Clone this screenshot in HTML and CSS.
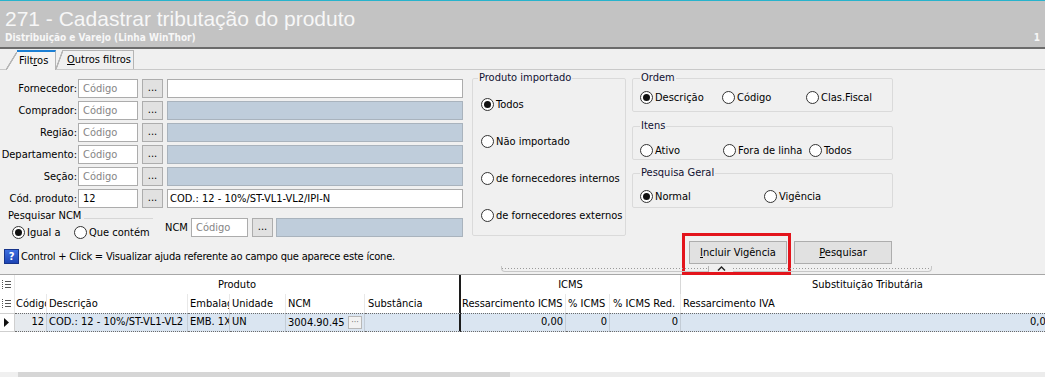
FILE: index.html
```html
<!DOCTYPE html>
<html lang="pt-BR">
<head>
<meta charset="utf-8">
<title>271 - Cadastrar tributação do produto</title>
<link rel="stylesheet" href="styles.css">
</head>
<body>
<header class="hdr">
  <div class="title">271 - Cadastrar tributação do produto</div>
  <div class="subrow"><span class="subtitle">Distribuição e Varejo (Linha WinThor)</span><span class="ver">1</span></div>
</header>
<nav class="tabs">
  <div class="tab tab-active">Filt<u>r</u>os</div>
  <div class="tab tab-2"><u>O</u>utros filtros</div>
</nav>
<main class="panel">
  <section class="left">
    <div class="frow"><span class="flabel">Fornecedor:</span><span class="code ph">Código</span><span class="dots">...</span><span class="desc desc-white"></span></div>
    <div class="frow"><span class="flabel">Comprador:</span><span class="code ph">Código</span><span class="dots">...</span><span class="desc desc-gray"></span></div>
    <div class="frow"><span class="flabel">Região:</span><span class="code ph">Código</span><span class="dots">...</span><span class="desc desc-gray"></span></div>
    <div class="frow"><span class="flabel">Departamento:</span><span class="code ph">Código</span><span class="dots">...</span><span class="desc desc-gray"></span></div>
    <div class="frow"><span class="flabel">Seção:</span><span class="code ph">Código</span><span class="dots">...</span><span class="desc desc-gray"></span></div>
    <div class="frow"><span class="flabel">Cód. produto:</span><span class="code">12</span><span class="dots">...</span><span class="desc desc-white">COD.: 12 - 10%/ST-VL1-VL2/IPI-N</span></div>
    <div class="ncm">
      <div class="ncm-search">
        <div class="ncm-legend"><span>Pesquisar NCM</span><span class="ncm-line"></span></div>
        <div class="ncm-opts">
          <span class="radio on w-igual"><i></i>Igual a</span>
          <span class="radio"><i></i>Que contém</span>
        </div>
      </div>
      <div class="ncm-field"><span class="ncm-label">NCM</span><span class="code code-ncm ph">Código</span><span class="dots">...</span><span class="desc desc-gray desc-ncm"></span></div>
    </div>
    <div class="help"><span class="help-icon">?</span>Control + Click = Visualizar ajuda referente ao campo que aparece este ícone.</div>
  </section>

  <fieldset class="grp grp-imp">
    <legend>Produto importado</legend>
    <div class="imp-opts">
      <span class="radio on"><i></i>Todos</span>
      <span class="radio"><i></i>Não importado</span>
      <span class="radio"><i></i>de fornecedores internos</span>
      <span class="radio"><i></i>de fornecedores externos</span>
    </div>
  </fieldset>

  <section class="right">
    <fieldset class="grp g-ordem">
      <legend>Ordem</legend>
      <div class="opts opts-ordem">
        <span class="radio on"><i></i>Descrição</span>
        <span class="radio"><i></i>Código</span>
        <span class="radio"><i></i>Clas.Fiscal</span>
      </div>
    </fieldset>
    <fieldset class="grp g-itens">
      <legend>Itens</legend>
      <div class="opts opts-itens">
        <span class="radio"><i></i>Ativo</span>
        <span class="radio"><i></i>Fora de linha</span>
        <span class="radio"><i></i>Todos</span>
      </div>
    </fieldset>
    <fieldset class="grp g-geral">
      <legend>Pesquisa Geral</legend>
      <div class="opts opts-geral">
        <span class="radio on"><i></i>Normal</span>
        <span class="radio"><i></i>Vigência</span>
      </div>
    </fieldset>
    <div class="btns">
      <div class="btn"><span><u>I</u>ncluir Vigência</span><span class="mark"></span></div>
      <div class="btn"><span><u>P</u>esquisar</span></div>
    </div>
  </section>
</main>

<div class="splitter">
  <div class="split-bar">
    <span class="knob"><svg width="9" height="5" viewBox="0 0 9 5"><path d="M1 4.5 L4.5 1 L8 4.5" fill="none" stroke="#222" stroke-width="1.4"/></svg></span>
  </div>
</div>

<section class="grid">
  <div class="gh gh1">
    <div class="hc ind"><svg class="colicon" width="9" height="9" viewBox="0 0 9 9"><g fill="#555"><rect x="0" y="0" width="1" height="1"/><rect x="0" y="2" width="1" height="1"/><rect x="0" y="4" width="1" height="1"/><rect x="0" y="6" width="1" height="1"/><rect x="0" y="8" width="1" height="1"/><rect x="3" y="1" width="6" height="1"/><rect x="3" y="4" width="6" height="1"/><rect x="3" y="7" width="6" height="1"/></g></svg></div>
    <div class="hc span-prod center thick">Produto</div>
    <div class="hc span-icms center">ICMS</div>
    <div class="hc center">Substituição Tributária</div>
  </div>
  <div class="gh gh2">
    <div class="hc ind"><svg class="colicon" width="9" height="9" viewBox="0 0 9 9"><g fill="#555"><rect x="0" y="0" width="1" height="1"/><rect x="0" y="2" width="1" height="1"/><rect x="0" y="4" width="1" height="1"/><rect x="0" y="6" width="1" height="1"/><rect x="0" y="8" width="1" height="1"/><rect x="3" y="1" width="6" height="1"/><rect x="3" y="4" width="6" height="1"/><rect x="3" y="7" width="6" height="1"/></g></svg></div>
    <div class="hc pad1">Código</div>
    <div class="hc">Descrição</div>
    <div class="hc">Embalagem</div>
    <div class="hc">Unidade</div>
    <div class="hc">NCM</div>
    <div class="hc thick pad3">Substância</div>
    <div class="hc pad1">Ressarcimento ICMS</div>
    <div class="hc">% ICMS</div>
    <div class="hc pad3">% ICMS Red.</div>
    <div class="hc">Ressarcimento IVA</div>
  </div>
  <div class="gr">
    <div class="dc ind"><svg width="6" height="9" viewBox="0 0 6 9"><path d="M0 0 L5 4.5 L0 9 Z" fill="#111"/></svg></div>
    <div class="dc num dc-focus">12</div>
    <div class="dc">COD.: 12 - 10%/ST-VL1-VL2</div>
    <div class="dc">EMB. 1X10</div>
    <div class="dc">UN</div>
    <div class="dc dc-ncm"><span>3004.90.45</span><span class="mini">···</span></div>
    <div class="dc thick"></div>
    <div class="dc num">0,00</div>
    <div class="dc num">0</div>
    <div class="dc num">0</div>
    <div class="dc num">0,00</div>
  </div>
  <div class="gfill"></div>
  <div class="hscroll"><span class="hs-btn"></span><span class="hs-thumb"></span></div>
</section>
</body>
</html>
```

FILE: styles.css
```css
* { box-sizing: border-box; }

html, body {
  margin: 0;
  overflow: hidden;
  background: #f0f0f0;
}

body {
  width: 1045px;
  height: 377px;
  font: 11px "DejaVu Sans Condensed", "DejaVu Sans", sans-serif;
  color: #000;
}

/* ---------- header ---------- */
.hdr {
  height: 49px;
  border-top: 1px solid #27b3cc;
  border-bottom: 2px solid #6b6b6b;
  background: #c3c3c3;
  padding: 6px 0 0 5px;
  color: #f7f7f7;
}

.title {
  font: 21px/24px "Liberation Sans", Arial, sans-serif;
  white-space: nowrap;
}

.subrow {
  display: flex;
  justify-content: space-between;
  margin-top: 1px;
  height: 12px;
}

.subtitle,
.ver {
  font-size: 10px;
  line-height: 12px;
  font-weight: bold;
}

.ver { padding-right: 5px; }

/* ---------- tabs ---------- */
.tabs {
  height: 21px;
  border-bottom: 1px solid #c9c9c9;
  display: flex;
  align-items: flex-end;
  padding-left: 17px;
}

.tab {
  position: relative;
  height: 19px;
  line-height: 17px;
  border-top: 1px solid #b5b5b5;
  border-right: 1px solid #b5b5b5;
  background: #f0f0f0;
  white-space: nowrap;
}

.tab::before {
  content: "";
  position: absolute;
  top: -1px;
  bottom: 0;
  right: 100%;
  width: 11px;
  background: linear-gradient(to bottom right, transparent calc(50% - 1px), #b5b5b5 calc(50% - 0.5px), #b5b5b5 calc(50% + 0.5px), #f0f0f0 calc(50% + 1px));
}

.tab-active {
  width: 39px;
  padding-left: 2px;
  border-top: 2px solid #1b7fd4;
  background: #f4f4f4;
  margin-bottom: -1px;
  height: 20px;
}

.tab-active::before {
  top: 0;
  background: linear-gradient(to bottom right, transparent calc(50% - 1px), #b5b5b5 calc(50% - 0.5px), #b5b5b5 calc(50% + 0.5px), #f4f4f4 calc(50% + 1px));
}

.tab-2 {
  width: 71px;
  margin-left: 7px;
  padding-left: 4px;
}

.tab-2::before { width: 7px; }

/* ---------- panel ---------- */
.panel {
  display: flex;
  align-items: flex-start;
  height: 196px;
}

.left {
  width: 466px;
  padding-top: 9px;
}

.frow {
  display: flex;
  height: 19px;
  margin-bottom: 3px;
}

.flabel {
  width: 77px;
  margin-right: 1px;
  text-align: right;
  line-height: 19px;
  white-space: nowrap;
}

.code {
  width: 60px;
  border: 1px solid #acacac;
  background: #fff;
  padding-left: 4px;
  line-height: 17px;
}

.ph { color: #858585; }

.dots {
  width: 21px;
  margin-left: 4px;
  background: #e1e1e1;
  border: 1px solid #adadad;
  text-align: center;
  line-height: 16px;
}

.desc {
  width: 296px;
  margin-left: 4px;
  border: 1px solid #acacac;
  padding-left: 2px;
  line-height: 17px;
  white-space: nowrap;
}

.desc-gray {
  background: #bfcddb;
  border-color: #a9b3bd;
}

.desc-white { background: #fff; }

.ncm {
  display: flex;
  height: 32px;
  margin-top: -2px;
}

.ncm-search {
  width: 153px;
  padding-left: 8px;
}

.ncm-legend {
  display: flex;
  align-items: center;
  height: 14px;
  line-height: 14px;
  white-space: nowrap;
}

.ncm-line {
  flex: 1;
  height: 1px;
  margin: 4px 0 0 3px;
  background: #d6d6d6;
}

.ncm-opts {
  display: flex;
  margin-top: 1px;
  padding-left: 4px;
}

.w-igual { width: 62px; }

.ncm-field {
  display: flex;
  height: 19px;
  margin: 9px 0 0 12px;
}

.ncm-label {
  width: 26px;
  line-height: 19px;
}

.code-ncm { width: 57px; }

.desc-ncm {
  width: 187px;
  margin-left: 3px;
}

.help {
  display: flex;
  align-items: center;
  height: 16px;
  margin-top: 7px;
  padding-left: 4px;
  white-space: nowrap;
  letter-spacing: -0.2px;
}

.help-icon {
  width: 15px;
  height: 15px;
  margin-right: 2px;
  background: linear-gradient(#3d6fe0, #1d45b5);
  border: 1px solid #17348a;
  color: #fff;
  font-weight: bold;
  font-size: 11px;
  line-height: 13px;
  text-align: center;
  letter-spacing: 0;
}

/* ---------- radios ---------- */
.radio {
  display: flex;
  align-items: center;
  height: 16px;
  white-space: nowrap;
}

.radio i {
  position: relative;
  flex: none;
  width: 13px;
  height: 13px;
  margin-right: 2px;
  border: 1px solid #333;
  border-radius: 50%;
  background: #fff;
}

.radio.on i::after {
  content: "";
  position: absolute;
  inset: 2px;
  border-radius: 50%;
  background: #111;
}

/* ---------- group boxes ---------- */
.grp {
  margin: 0;
  padding: 0;
  min-width: 0;
  border: 1px solid #dadada;
  border-radius: 2px;
}

.grp legend {
  padding: 0 1px;
  margin-left: 7px;
  line-height: 12px;
  color: #101030;
}

.grp-imp {
  width: 154px;
  height: 164px;
  margin: 2px 0 0 6px;
}

.grp-imp legend { margin-left: 5px; }

.imp-opts {
  display: flex;
  flex-direction: column;
  gap: 21px;
  padding: 12px 0 0 8px;
}

.right {
  width: 261px;
  margin: 2px 0 0 6px;
}

.g-ordem { height: 40px; }
.g-itens { height: 40px; margin-top: 8px; }
.g-geral { height: 41px; margin-top: 7px; }

.opts {
  display: grid;
  padding-left: 7px;
}

.opts-ordem { grid-template-columns: 82px 84px auto; padding-top: 5px; }
.opts-itens { grid-template-columns: 83px 86px auto; padding-top: 10px; }
.opts-geral { grid-template-columns: 124px auto; padding-top: 9px; }

.btns {
  display: flex;
  justify-content: flex-end;
  gap: 7px;
  margin-top: 33px;
  padding-right: 1px;
}

.btn {
  position: relative;
  width: 98px;
  height: 23px;
  display: flex;
  align-items: center;
  justify-content: center;
  background: #e1e1e1;
  border: 1px solid #adadad;
}

.mark {
  position: absolute;
  left: -8px;
  top: -9px;
  width: 109px;
  height: 42px;
  border: 3px solid #e3141c;
}

/* ---------- splitter ---------- */
.splitter {
  height: 8px;
}

.split-bar {
  position: relative;
  margin-left: 501px;
  width: 431px;
  height: 6px;
  border: 1px solid #c6c6c6;
  border-top: none;
  border-radius: 0 0 4px 4px;
  background-image: repeating-linear-gradient(to right, #9a9a9a 0 1px, transparent 1px 3px);
  background-size: 100% 1px;
  background-position: 0 2px;
  background-repeat: no-repeat;
}

.knob {
  position: absolute;
  left: 206px;
  top: 0;
  width: 25px;
  height: 6px;
  background: #f0f0f0;
  border-left: 1px solid #b4b4b4;
  display: flex;
  justify-content: center;
  align-items: flex-start;
}

/* ---------- grid ---------- */
.grid {
  border-top: 1px solid #a7a7a7;
  background: #fff;
  overflow: hidden;
}

.gh,
.gr {
  display: grid;
  grid-template-columns: 15px 32px 141px 42px 56px 79px 96px 105px 44px 71px 374px;
  width: 1055px;
}

.gh { height: 19px; }

.hc {
  border-right: 1px solid #e8e8e8;
  padding-left: 2px;
  line-height: 19px;
  overflow: hidden;
  white-space: nowrap;
  background: #fff;
}

.hc.ind {
  padding-left: 2px;
  display: flex;
  align-items: center;
}

.center { text-align: center; padding-left: 0; }
.pad1 { padding-left: 1px; }
.pad3 { padding-left: 3px; }

.span-prod { grid-column: span 6; }
.span-icms { grid-column: span 3; border-right-color: #d8d8d8; }

.thick { border-right: 2px solid #1c1c1c !important; }

.gr { height: 19px; }

.dc {
  border-right: 1px solid #c3ccd6;
  border-top: 1px dotted #6a6a6a;
  border-bottom: 1px dotted #6a6a6a;
  background: #dae5f1;
  padding-left: 2px;
  line-height: 16px;
  overflow: hidden;
  white-space: nowrap;
}

.dc.ind {
  background: #fff;
  border: 1px solid #cfcfcf;
  border-left: none;
  display: flex;
  align-items: center;
  padding-left: 4px;
}

.dc-focus { background: #e6eaee; }

.num {
  text-align: right;
  padding-left: 0;
  padding-right: 2px;
}

.dc-ncm {
  display: flex;
  justify-content: space-between;
  align-items: center;
  padding-right: 2px;
}

.mini {
  width: 14px;
  height: 13px;
  background: #f2f2f2;
  border: 1px solid #b8b8b8;
  color: #777;
  font-size: 9px;
  line-height: 10px;
  text-align: center;
}

.gfill { height: 40px; }

.hscroll {
  display: flex;
  height: 17px;
  background: #ececec;
}

.hs-btn {
  width: 18px;
  background: #f0f0f0;
}

.hs-thumb {
  width: 492px;
  background: #d6d6d6;
}
```
